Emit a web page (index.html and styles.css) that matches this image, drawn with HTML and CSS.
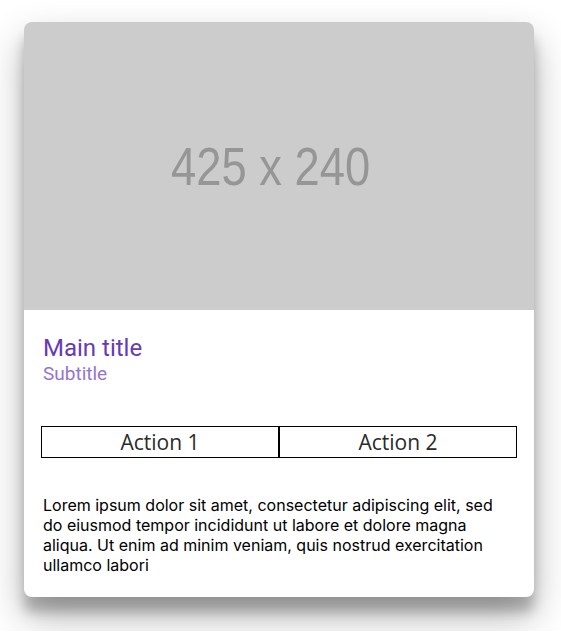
FILE: index.html
```html
<!DOCTYPE html>
<html>
<head>
<meta charset="utf-8">
<link rel="stylesheet" href="styles.css">
</head>
<body>
<div class="card">
  <div class="media"><span class="media-label">425 x 240</span></div>
  <div class="content">
    <div class="title">Main title</div>
    <div class="subtitle">Subtitle</div>
    <div class="actions">
      <button class="action">Action 1</button>
      <button class="action">Action 2</button>
    </div>
    <p class="text">Lorem ipsum dolor sit amet, consectetur adipiscing elit, sed do eiusmod tempor incididunt ut labore et dolore magna aliqua. Ut enim ad minim veniam, quis nostrud exercitation ullamco labori</p>
  </div>
</div>
</body>
</html>
```
FILE: styles.css
```css
html, body {
  margin: 0;
  padding: 0;
  background: #ffffff;
}
body {
  padding: 22px 27px 34px 24px;
  font-family: Roboto, "Liberation Sans", sans-serif;
}
.card {
  width: 510px;
  background: #fff;
  border-radius: 8px;
  overflow: hidden;
  box-shadow: 0 19px 38px rgba(0,0,0,0.30), 0 15px 12px rgba(0,0,0,0.22);
}
.media {
  height: 288px;
  background: #cccccc;
  display: flex;
  align-items: center;
  justify-content: center;
}
.media-label {
  font-family: "Liberation Sans", Arial, sans-serif;
  font-size: 54px;
  color: #969696;
  white-space: nowrap;
  transform: translateX(-8px) scaleX(0.84);
}
.content {
  padding: 24px 17px 22px 17px;
}
.title {
  margin-left: 2px;
  font-size: 24px;
  color: #673ab7;
}
.subtitle {
  margin-left: 2px;
  font-size: 19px;
  color: #9575cd;
}
.actions {
  display: flex;
  margin-top: 41px;
}
.action {
  flex: 1;
  height: 32px;
  margin: 0;
  padding: 0;
  border: 1px solid #000;
  background: #fff;
  font-family: "Open Sans", sans-serif;
  font-size: 21px;
  line-height: 30px;
  color: #2a2a2a;
}
.text {
  margin: 37px 12px 0 2px;
  font-family: Inter, Roboto, sans-serif;
  font-size: 16px;
  line-height: 20px;
  color: #000;
}
```
